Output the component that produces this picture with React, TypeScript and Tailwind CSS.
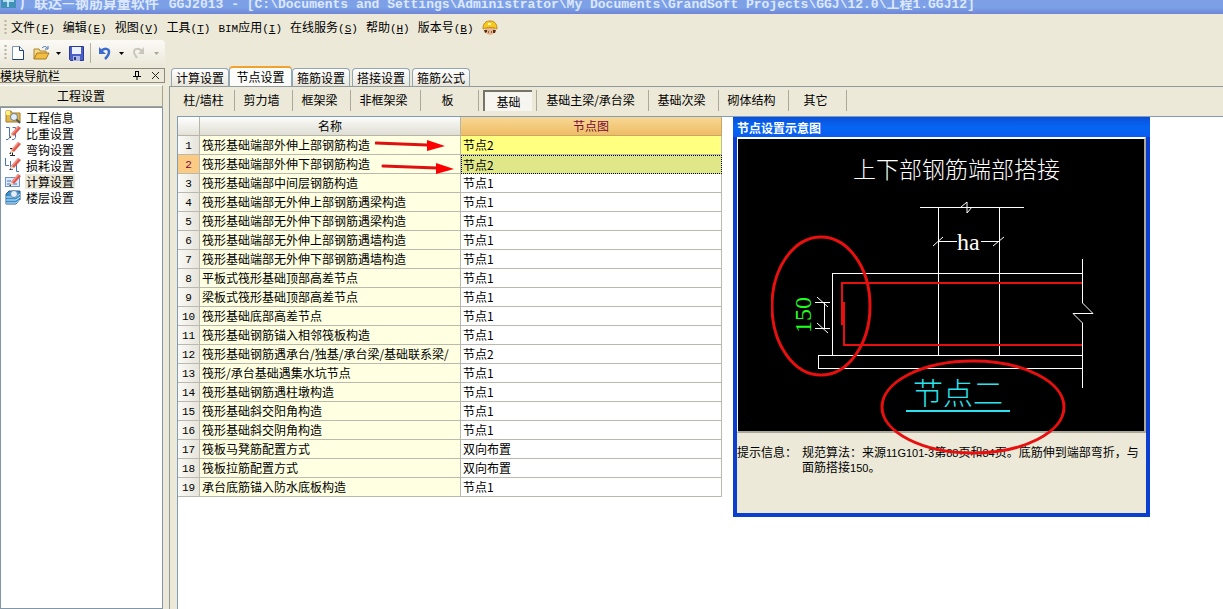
import type { ReactNode } from 'react'

const menus = [
	{ label: '文件', hotkey: 'F' },
	{ label: '编辑', hotkey: 'E' },
	{ label: '视图', hotkey: 'V' },
	{ label: '工具', hotkey: 'T' },
	{ prefix: 'BIM', label: '应用', hotkey: 'I' },
	{ label: '在线服务', hotkey: 'S' },
	{ label: '帮助', hotkey: 'H' },
	{ label: '版本号', hotkey: 'B' },
]

const tabs = ['计算设置', '节点设置', '箍筋设置', '搭接设置', '箍筋公式']

const categories = [
	{ label: '柱/墙柱', width: 'w-[58px]' },
	{ label: '剪力墙', width: 'w-[58px]' },
	{ label: '框架梁', width: 'w-[58px]' },
	{ label: '非框架梁', width: 'w-[70px]' },
	{ label: '板', width: 'w-[58px]' },
	{ label: '基础', width: 'w-[58px]' },
	{ label: '基础主梁/承台梁', width: 'w-[112px]' },
	{ label: '基础次梁', width: 'w-[70px]' },
	{ label: '砌体结构', width: 'w-[70px]' },
	{ label: '其它', width: 'w-[58px]' },
]

const rows = [
	['筏形基础端部外伸上部钢筋构造', '节点2'],
	['筏形基础端部外伸下部钢筋构造', '节点2'],
	['筏形基础端部中间层钢筋构造', '节点1'],
	['筏形基础端部无外伸上部钢筋遇梁构造', '节点1'],
	['筏形基础端部无外伸下部钢筋遇梁构造', '节点1'],
	['筏形基础端部无外伸上部钢筋遇墙构造', '节点1'],
	['筏形基础端部无外伸下部钢筋遇墙构造', '节点1'],
	['平板式筏形基础顶部高差节点', '节点1'],
	['梁板式筏形基础顶部高差节点', '节点1'],
	['筏形基础底部高差节点', '节点1'],
	['筏形基础钢筋锚入相邻筏板构造', '节点1'],
	['筏形基础钢筋遇承台/独基/承台梁/基础联系梁/', '节点2'],
	['筏形/承台基础遇集水坑节点', '节点1'],
	['筏形基础钢筋遇柱墩构造', '节点1'],
	['筏形基础斜交阳角构造', '节点1'],
	['筏形基础斜交阴角构造', '节点1'],
	['筏板马凳筋配置方式', '双向布置'],
	['筏板拉筋配置方式', '双向布置'],
	['承台底筋锚入防水底板构造', '节点1'],
]

// Latin text set narrower than the Chinese around it
function Half({ children }: { children: ReactNode }) {
	return <span className="font-['Liberation_Mono',monospace] text-[11px]">{children}</span>
}

function Num({ children }: { children: ReactNode }) {
	return <span className="font-['Liberation_Sans',sans-serif] text-[11px]">{children}</span>
}

function Pencil() {
	return (
		<g>
			<path d="M6 9 L13 1 L16 3 L9 11 Z" fill="#e2574c" />
			<path d="M6 9 L13 1 L14 2 L7 10 Z" fill="#f59a8c" />
			<path d="M6 9 L9 11 L4 13 Z" fill="#f3dcc0" />
			<path d="M4 13 L6 11 L6 13 Z" fill="#333" />
		</g>
	)
}

const navItems = [
	{
		label: '工程信息',
		icon: (
			<>
				<path d="M1 2h5l1 2h8v9H1z" fill="#e0b850" stroke="#a57b22" />
				<path d="M1 2h4v4H1z" fill="#fff07a" />
				<circle cx="9" cy="8" r="3.5" fill="#e2effb" stroke="#6d7c93" />
				<path d="M11.5 10.5 15 14" stroke="#555" strokeWidth="2" />
			</>
		),
	},
	{
		label: '比重设置',
		icon: (
			<>
				<path d="M1 2.5h3.5v10L3 14.500H1M7.500 2.500h3v10L9 14.500H7" fill="none" stroke="#4773b4" />
				<Pencil />
			</>
		),
	},
	{
		label: '弯钩设置',
		icon: (
			<>
				<path d="M7.500 7v8M5 14.500h5M5 7.500h5" fill="none" stroke="#222" />
				<Pencil />
			</>
		),
	},
	{
		label: '损耗设置',
		icon: (
			<>
				<path d="M.5 1v7.500H4M5.500 4v8.500H8M11.500 5v9.500H14" fill="none" stroke="#4773b4" />
				<Pencil />
			</>
		),
	},
	{
		label: '计算设置',
		icon: (
			<>
				<rect x="0.5" y="4.5" width="14" height="9" fill="#dceafa" stroke="#6f94cf" />
				<path d="M2 8h4M2 11h10" stroke="#3f73c8" />
				<Pencil />
			</>
		),
	},
	{
		label: '楼层设置',
		icon: (
			<>
				<path d="M4 2h11v9l-4 4H1V5z" fill="#3d8fcb" stroke="#245f94" />
				<path d="M1 8h10l4-3M1 11h10l4-3M1 14h10l4-3" fill="none" stroke="#cfe9fa" />
				<circle cx="9" cy="5" r="3.5" fill="#e2effb" stroke="#5e86ad" />
			</>
		),
	},
]

function TitleBar() {
	return (
		<header className="h-[14px] overflow-hidden bg-gradient-to-b from-[#7f9ee6] via-[#7ba2e7] to-[#7186d6]">
			<div className="-mt-2 flex h-5 items-baseline gap-1 whitespace-nowrap font-bold text-[#dde8ff]">
				<svg width="16" height="20" viewBox="0 0 16 20" className="shrink-0 self-center">
					<rect x="1" y="2" width="15" height="14" fill="#3f91b8" />
					<path d="M8 2v13M3 9h11M4 5h8" stroke="#d8f4ff" strokeWidth="1.5" />
				</svg>
				<span className="text-sm leading-5">广联达—钢筋算量软件</span>
				<span className="pl-1.5 font-['Liberation_Mono','Noto_Sans_CJK_SC',monospace] text-[13px] leading-5">
					GGJ2013 - [C:\Documents and Settings\Administrator\My Documents\GrandSoft Projects\GGJ\12.0\工程1.GGJ12]
				</span>
			</div>
		</header>
	)
}

function Grip() {
	return (
		<svg width="3" height="16" viewBox="0 0 3 16" className="shrink-0">
			<path d="M1.5 0v16" stroke="#b5b19e" strokeWidth="2" strokeDasharray="2 2" />
		</svg>
	)
}

function MenuBar() {
	return (
		<nav className="flex h-[26px] items-center gap-2 pl-1 pt-px">
			<div className="-mr-1 flex"><Grip /></div>
			{menus.map((menu) => (
				<button key={menu.label} className="whitespace-nowrap">
					{menu.prefix && <Half>{menu.prefix}</Half>}
					{menu.label}
					<Half>
						(<u>{menu.hotkey}</u>)
					</Half>
				</button>
			))}
			<button aria-label="客服">
				<svg width="16" height="16" viewBox="0 0 16 16">
					<circle cx="8" cy="10" r="5" fill="#e8b48c" />
					<path d="M2 10 3 13 5 12 5 10 11 10 11 13 13 13 14 10z" fill="#5b2a12" />
					<path d="M1 9C1 3 4 1 8 1s7 2 7 8c-4-2-10-2-14 0z" fill="#f6c920" stroke="#c38a12" />
					<path d="M6 4h3" stroke="#fff6b0" strokeWidth="2" />
					<path d="M6 12h1M9 12h1" stroke="#222" />
				</svg>
			</button>
		</nav>
	)
}

function Caret({ color }: { color: string }) {
	return (
		<svg width="5" height="3" viewBox="0 0 5 3">
			<path d="M0 0h5L2.5 3z" fill={color} />
		</svg>
	)
}

function ToolBar() {
	return (
		<div className="flex h-[26px] w-[165px] items-center rounded-r bg-gradient-to-b from-[#fbfaf6] to-[#ebe8d9] pl-1">
			<Grip />
			<button aria-label="新建" className="ml-1">
				<svg width="14" height="16" viewBox="0 0 14 16">
					<path d="M1.5 1.5h7l4 4v9h-11z" fill="#fff" stroke="#7c93bd" />
					<path d="M8.5 1.5v4h4v9h-11" fill="none" stroke="#1f3f78" />
				</svg>
			</button>
			<button aria-label="打开" className="ml-2">
				<svg width="17" height="16" viewBox="0 0 17 16">
					<path d="M1 14V4h5l1 2h6v3" fill="#f7d98a" stroke="#b1852b" />
					<path d="M1 14 4 8h12l-3 6z" fill="#f3bd42" stroke="#a77a20" />
					<path d="M9 3c2-2 4-2 5 0M15 1v3h-3" fill="none" stroke="#456fae" />
				</svg>
			</button>
			<button aria-label="打开列表" className="ml-1.5"><Caret color="#000" /></button>
			<button aria-label="保存" className="ml-2">
				<svg width="15" height="15" viewBox="0 0 15 15">
					<path d="M.5.5h14v14h-13l-1-1z" fill="#4b5fc4" stroke="#2b3a93" />
					<path d="M3 1h9v7H3z" fill="#eef2fd" />
					<path d="M4 10h7v5H4z" fill="#aab6e6" />
					<path d="M5 11h2v3H5z" fill="#26347f" />
				</svg>
			</button>
			<div className="ml-1.5 h-5 w-px bg-[#b4b09c]" />
			<button aria-label="撤销" className="ml-2">
				<svg width="12" height="14" viewBox="0 0 12 14">
					<path d="M2 5C5 2 10 2 10 6c0 3-2 5-4 7" fill="none" stroke="#3c6bd0" strokeWidth="2.5" />
					<path d="M0 1v7h7z" fill="#3c6bd0" />
				</svg>
			</button>
			<button aria-label="撤销列表" className="ml-2"><Caret color="#000" /></button>
			<button aria-label="恢复" className="ml-2" disabled>
				<svg width="12" height="14" viewBox="0 0 12 14">
					<path d="M10 5C7 2 2 2 2 6c0 3 2 4 3 6" fill="none" stroke="#c9c7bd" strokeWidth="2" />
					<path d="M12 1v7H6z" fill="#c9c7bd" />
				</svg>
			</button>
			<button aria-label="恢复列表" className="ml-2.5" disabled><Caret color="#aaa798" /></button>
		</div>
	)
}

function Sidebar() {
	return (
		<aside className="flex w-[165px] shrink-0 flex-col pt-0.5">
			<div className="flex h-[15px] items-center border border-l-0 border-[#8c8a7e] leading-3">
				<span className="flex-1">模块导航栏</span>
				<button aria-label="固定" className="mr-2.5">
					<svg width="8" height="9" viewBox="0 0 8 9">
						<path d="M2 .5h4M2.5 0v5M5.5 0v5M0 5.5h8M4 5v4" fill="none" stroke="#000" />
						<path d="M5 0h1v5H5z" />
					</svg>
				</button>
				<button aria-label="关闭" className="mr-1">
					<svg width="9" height="9" viewBox="0 0 9 9">
						<path d="M1 1l7 7M8 1 1 8" stroke="#222" />
					</svg>
				</button>
			</div>
			<button className="mr-0.5 mt-0.5 h-[22px] border-b border-r border-[#a5a28e] border-t border-t-white">工程设置</button>
			<ul className="mr-0.5 flex-1 border border-[#8197a8] bg-white pt-px">
				{navItems.map((item) => (
					<li key={item.label}>
						<button className="flex h-4 items-center gap-1 pl-1">
							<svg width="16" height="16" viewBox="0 0 16 16">{item.icon}</svg>
							<span className={`px-px leading-[15px] ${item.label === '计算设置' ? 'bg-[#ece9d8]' : ''}`}>
								{item.label}
							</span>
						</button>
					</li>
				))}
			</ul>
		</aside>
	)
}

function NodeTable() {
	return (
		<div className="relative w-[544px] shrink-0">
			<table className="w-full table-fixed border-separate border-spacing-0">
				<colgroup>
					<col className="w-[22px]" />
					<col className="w-[261px]" />
					<col className="w-[261px]" />
				</colgroup>
				<thead>
					<tr className="h-[19px]">
						<th className="border-b border-r border-[#b5b5a8] bg-gradient-to-b from-white to-[#e4e2d8]" aria-label="序号" />
						<th className="border-b border-r border-[#b5b5a8] bg-gradient-to-b from-[#fbfbf9] to-[#e0ded4] p-0 font-normal leading-4">名称</th>
						<th className="border-b border-r border-[#c9a566] bg-gradient-to-b from-[#f8d794] to-[#eebd65] p-0 font-normal leading-4 text-[#750a3c]">节点图</th>
					</tr>
				</thead>
				<tbody>
					{rows.map(([name, node], index) => (
						<tr key={name} className="h-[19px]">
							<td
								className={`border-b border-r border-[#b9b9b0] p-0 text-center leading-4 ${
									index === 1 ? 'bg-[#fbcb84] text-[#750a3c]' : 'bg-gradient-to-r from-[#fafaf7] to-[#e6e4da]'
								}`}
							>
								<Half>{index + 1}</Half>
							</td>
							<td className="overflow-hidden whitespace-nowrap border-b border-r border-[#b9b9b0] bg-[#ffffe1] p-0 pl-0.5 leading-4">
								{name}
							</td>
							<td
								className={`p-0 leading-4 ${
									index === 0
										? 'border-b border-r border-[#b9b9b0] bg-[#ffff80] pl-0.5'
										: index === 1
										? 'border border-dotted border-black bg-[#dfe788] pl-px'
										: 'border-b border-r border-[#b9b9b0] bg-white pl-0.5'
								}`}
							>
								{node}
							</td>
						</tr>
					))}
				</tbody>
			</table>
			<svg width="84" height="40" viewBox="0 0 84 40" className="absolute left-[197px] top-[20px]">
				<path d="M1 6 52 8" stroke="#e01010" strokeWidth="3" strokeLinecap="round" />
				<path d="M52 3 70 9 52 14z" fill="#f00" />
				<path d="M8 29 62 31" stroke="#e01010" strokeWidth="3" strokeLinecap="round" />
				<path d="M61 26 79 32 61 37z" fill="#f00" />
			</svg>
		</div>
	)
}

function Drawing() {
	return (
		<svg width="406" height="292" viewBox="0 0 406 292" className="block bg-black">
			<g fontFamily="'Noto Sans CJK SC', sans-serif" fontWeight="300">
				<text x="115" y="39" fontSize="23" fill="#fff">上下部钢筋端部搭接</text>
				<text x="175" y="265" fontSize="30" fill="#2be3ee">节点二</text>
			</g>
			<g fontFamily="'Liberation Serif', serif" fontSize="24">
				<text x="219" y="111" fill="#fff">ha</text>
				<text x="73" y="194" fill="#1fff1f" transform="rotate(-90 73 194)">150</text>
			</g>
			<g fill="none" stroke="#fff" shapeRendering="crispEdges">
				<path d="M182 68.5h104M200.5 68v148M261.5 68v148" />
				<path d="M200 102.5h19M243 102.5h18" />
				<path d="M344.5 120v44M344.5 184v65" />
				<path d="M344 134.5H94.5V216M344 216.5H80.5V229.5H344" />
				<path d="M86.5 163v26M77 163.5h15M77 189.5h15" />
			</g>
			<g fill="none" stroke="#fff">
				<path d="M223 68 229 63V74L234 68" />
				<path d="M195 107 205 98M255 107 266 98" />
				<path d="M79 158 90 168M79 184 90 194" />
				<path d="M344.5 164 355 174.5H335L344.5 184" />
			</g>
			<g fill="none" stroke="#e80f0f" strokeWidth="2">
				<path d="M344 144H104V186M106 163V206H344" />
				<path d="M105 163v23" strokeWidth="4" />
			</g>
			<path d="M168 272h104" stroke="#2be3ee" strokeWidth="2" />
		</svg>
	)
}

function NodePreview() {
	return (
		<section className="relative ml-[11px] w-[417px] shrink-0 self-start border-4 border-t-0 border-[#0b3fd0] bg-[#ece9d8]">
			<h2 className="-mx-1 h-5 bg-gradient-to-b from-[#0a50d8] via-[#0565f2] to-[#0a5cf0] pl-1 font-bold leading-[22px] text-white">
				节点设置示意图
			</h2>
			<div className="border border-b-2 border-r-2 border-[#aca899] border-l-white border-t-2 border-t-white">
				<Drawing />
			</div>
			<div className="flex h-20 gap-1 whitespace-nowrap pt-3 leading-[14px]">
				<span className="w-[61px]">提示信息：</span>
				<p>
					规范算法：来源<Num>11G101-3</Num>第<Num>88</Num>页和<Num>84</Num>页。底筋伸到端部弯折，与
					<br />
					面筋搭接<Num>150</Num>。
				</p>
			</div>
			<svg width="300" height="224" viewBox="0 0 300 224" className="absolute left-[34px] top-[117px]">
				<g fill="none" stroke="#e80f0f" strokeWidth="3">
					<ellipse cx="50" cy="72" rx="49" ry="69" />
					<ellipse cx="202" cy="173" rx="91" ry="46" />
				</g>
			</svg>
		</section>
	)
}

export default function App() {
	return (
		<div className="flex min-h-screen flex-col bg-[#ece9d8] font-['Noto_Sans_CJK_SC',sans-serif] text-xs text-black">
			<TitleBar />
			<MenuBar />
			<ToolBar />
			<div className="flex flex-1">
				<Sidebar />
				<main className="ml-1 flex min-w-0 flex-1 flex-col">
					<div className="flex h-5 items-end pl-0.5">
						{tabs.map((tab, index) => (
							<button
								key={tab}
								className={
									tab === '节点设置'
										? 'h-5 w-[63px] rounded-t border border-b-0 border-t-2 border-[#91a7b4] border-t-[#f0a32c] bg-[#fcfcfa] leading-4'
										: `h-[18px] w-[58px] rounded-t border border-b-0 border-[#91a7b4] bg-gradient-to-b from-white to-[#e8e6dc] leading-4 ${
												index > 0 ? 'mr-0.5' : ''
										  }`
								}
							>
								{tab}
							</button>
						))}
					</div>
					<div className="flex flex-1 flex-col border-l border-t border-[#919b9c] pl-[7px] pt-[3px]">
						<div className="flex h-[21px]">
							{categories.map((item) => (
								<div key={item.label} className={`flex border-r border-[#aca899] ${item.width}`}>
									<button
										className={
											item.label === '基础'
												? 'mx-1 flex-1 border-l-2 border-t-2 border-[#77756a] bg-[#f6f5ef] leading-4'
												: 'flex-1 whitespace-nowrap pb-0.5 pr-1 leading-4'
										}
									>
										{item.label}
									</button>
								</div>
							))}
						</div>
						<div className="mt-[5px] flex flex-1 border-l border-t border-[#7f9db9] bg-white">
							<NodeTable />
							<NodePreview />
						</div>
					</div>
				</main>
			</div>
		</div>
	)
}
